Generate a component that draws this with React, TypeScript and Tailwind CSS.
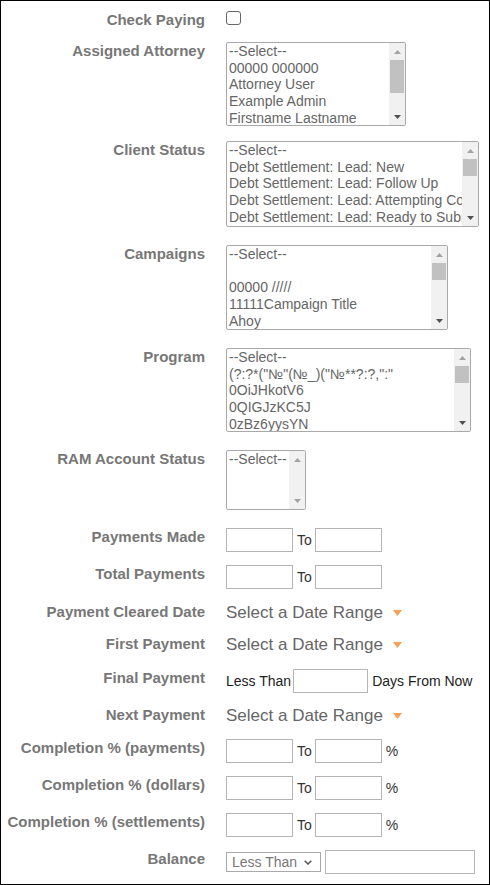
import React from "react";

type ListProps = {
  width: string;
  height: string;
  items: string[];
  thumb?: string;
};

function ArrowUp({ dark }: { dark?: boolean }) {
  return (
    <svg width="7" height="4" viewBox="0 0 7 4">
      <path d="M0 4 L3.5 0 L7 4 Z" fill={dark ? "#505050" : "#a3a3a3"} />
    </svg>
  );
}

function ArrowDown({ dark }: { dark?: boolean }) {
  return (
    <svg width="7" height="4" viewBox="0 0 7 4">
      <path d="M0 0 L3.5 4 L7 0 Z" fill={dark ? "#505050" : "#a3a3a3"} />
    </svg>
  );
}

function ListBox({ width, height, items, thumb }: ListProps) {
  return (
    <div
      className={`${width} ${height} flex border border-[#a9a9a9] rounded-[2px] bg-white overflow-hidden`}
    >
      <div className="flex-1 min-w-0 overflow-hidden pl-[2px] text-[14px] text-[#666] whitespace-nowrap">
        {items.map((item, i) => (
          <div key={i} className="h-[16.7px] leading-[16.7px]">
            {item === "" ? "\u00a0" : item}
          </div>
        ))}
      </div>
      <div className="w-[16px] shrink-0 bg-[#f1f1f1] flex flex-col">
        <div className="h-[17px] flex items-center justify-center">
          <ArrowUp />
        </div>
        {thumb && <div className={`${thumb} mx-[1px] bg-[#c1c1c1]`} />}
        <div className="flex-1" />
        <div className="h-[17px] flex items-center justify-center">
          <ArrowDown dark={!!thumb} />
        </div>
      </div>
    </div>
  );
}

function Row({
  label,
  height,
  children,
}: {
  label: string;
  height: string;
  children: React.ReactNode;
}) {
  return (
    <div className={`${height} flex items-start`}>
      <div className="w-[204px] shrink-0 text-right text-[15px] leading-[17px] font-bold text-[#777]">
        {label}
      </div>
      <div className="ml-[21px] flex items-start">{children}</div>
    </div>
  );
}

function Box({ w = "w-[67px]" }: { w?: string }) {
  return <div className={`${w} h-[24px] border border-[#b5b5b5] bg-white`} />;
}

function Range({ percent }: { percent?: boolean }) {
  return (
    <div className="flex items-center text-[14px] leading-[16px] text-[#333]">
      <Box />
      <span className="ml-[4px] mr-[3px]">To</span>
      <Box />
      {percent && <span className="ml-[4px]">%</span>}
    </div>
  );
}

function DateRange() {
  return (
    <div className="flex items-center text-[17px] leading-[20px] text-[#666]">
      <span>Select a Date Range</span>
      <svg className="ml-[10px]" width="9" height="6" viewBox="0 0 9 6">
        <path d="M0 0 L9 0 L4.5 6 Z" fill="#f9a055" />
      </svg>
    </div>
  );
}

export default function App() {
  return (
    <div className="w-[490px] h-[885px] border border-black bg-white pt-[10px] font-['Liberation_Sans',Arial,sans-serif]">
      <Row label="Check Paying" height="h-[31px]">
        <div className="w-[15px] h-[14px] border border-[#666] rounded-[3px] bg-white" />
      </Row>
      <Row label="Assigned Attorney" height="h-[99px]">
        <ListBox
          width="w-[180px]"
          height="h-[84px]"
          thumb="h-[33px]"
          items={[
            "--Select--",
            "00000 000000",
            "Attorney User",
            "Example Admin",
            "Firstname Lastname",
          ]}
        />
      </Row>
      <Row label="Client Status" height="h-[104px]">
        <ListBox
          width="w-[253px]"
          height="h-[86px]"
          thumb="h-[17px]"
          items={[
            "--Select--",
            "Debt Settlement: Lead: New",
            "Debt Settlement: Lead: Follow Up",
            "Debt Settlement: Lead: Attempting Contact",
            "Debt Settlement: Lead: Ready to Submit",
          ]}
        />
      </Row>
      <Row label="Campaigns" height="h-[103px]">
        <ListBox
          width="w-[222px]"
          height="h-[85px]"
          thumb="h-[17px]"
          items={["--Select--", "", "00000 /////", "11111Campaign Title", "Ahoy"]}
        />
      </Row>
      <Row label="Program" height="h-[102px]">
        <ListBox
          width="w-[245px]"
          height="h-[84px]"
          thumb="h-[17px]"
          items={[
            "--Select--",
            "(?:?*(\"№\"(№_)(\"№**?:?,\":\"",
            "0OiJHkotV6",
            "0QIGJzKC5J",
            "0zBz6yysYN",
          ]}
        />
      </Row>
      <Row label="RAM Account Status" height="h-[78px]">
        <ListBox width="w-[80px]" height="h-[60px]" items={["--Select--"]} />
      </Row>
      <Row label="Payments Made" height="h-[37px]">
        <Range />
      </Row>
      <Row label="Total Payments" height="h-[38px]">
        <Range />
      </Row>
      <Row label="Payment Cleared Date" height="h-[32px]">
        <DateRange />
      </Row>
      <Row label="First Payment" height="h-[34px]">
        <DateRange />
      </Row>
      <Row label="Final Payment" height="h-[37px]">
        <div className="flex items-center text-[14px] leading-[16px] text-[#222]">
          <span>Less Than</span>
          <div className="ml-[2px]">
            <Box w="w-[75px]" />
          </div>
          <span className="ml-[4px]">Days From Now</span>
        </div>
      </Row>
      <Row label="Next Payment" height="h-[33px]">
        <DateRange />
      </Row>
      <Row label="Completion % (payments)" height="h-[37px]">
        <Range percent />
      </Row>
      <Row label="Completion % (dollars)" height="h-[37px]">
        <Range percent />
      </Row>
      <Row label="Completion % (settlements)" height="h-[37px]">
        <Range percent />
      </Row>
      <Row label="Balance" height="h-[30px]">
        <div className="flex items-start">
          <div className="mt-[2px] w-[95px] h-[20px] border border-[#a9a9a9] bg-white flex items-center pl-[5px] pr-[8px] text-[14px] text-[#777]">
            <span className="flex-1">Less Than</span>
            <svg width="8" height="5" viewBox="0 0 8 5">
              <path d="M0.7 0.7 L4 4 L7.3 0.7" fill="none" stroke="#555" strokeWidth="1.5" />
            </svg>
          </div>
          <div className="ml-[4px]">
            <Box w="w-[150px]" />
          </div>
        </div>
      </Row>
    </div>
  );
}
